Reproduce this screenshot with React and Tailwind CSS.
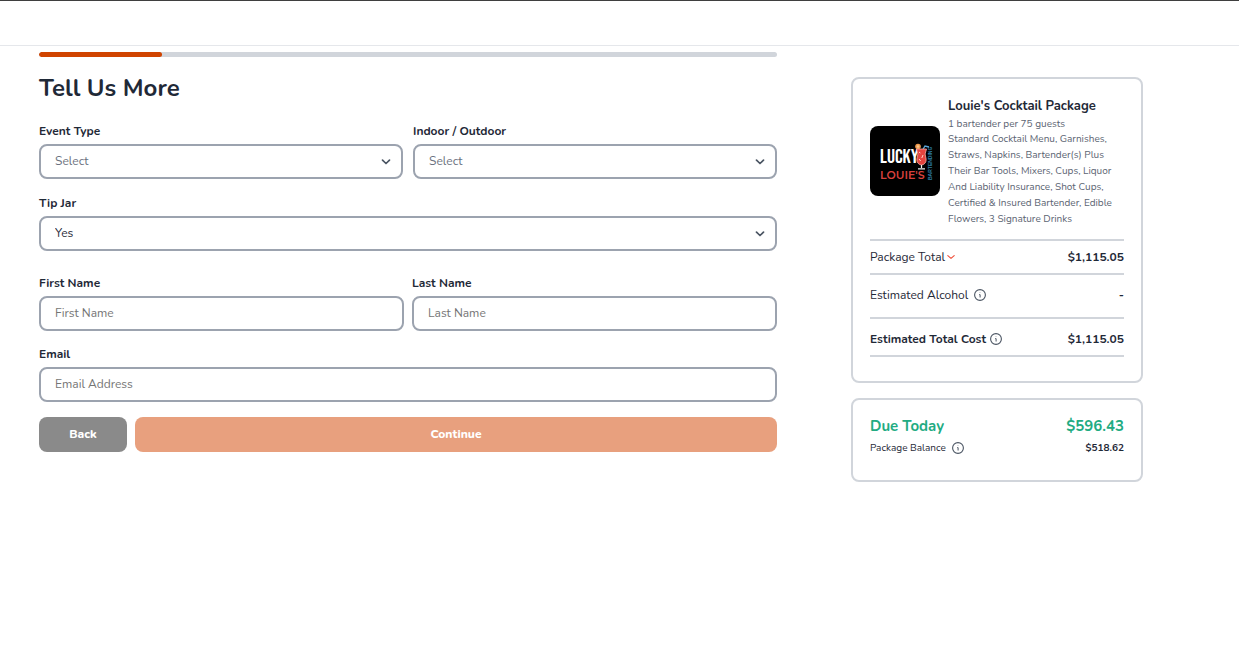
import { useState } from "react";
import clsx from "clsx";

const fieldClass =
    "block w-full h-[35px] rounded-lg border-2 border-[#9ca3af] bg-white px-3.5 pb-0.5 text-xs outline-none placeholder:text-[#757575] focus:border-[#d04400]";

function Field({ id, label, children }) {
    return (
        <div className="min-w-0 flex-1">
            <label htmlFor={id} className="mb-[5px] block text-xs leading-4 font-bold">
                {label}
            </label>
            {children}
        </div>
    );
}

function SelectField({ id, label, options, value, onChange }) {
    return (
        <Field id={id} label={label}>
            <div className="relative">
                <select
                    id={id}
                    value={value}
                    onChange={(e) => onChange(e.target.value)}
                    className={clsx(fieldClass, "appearance-none", value ? "text-[#1f2937]" : "text-[#6b7280]")}
                >
                    {options.map((option) => (
                        <option key={option} value={option === "Select" ? "" : option}>
                            {option}
                        </option>
                    ))}
                </select>
                <svg
                    className="pointer-events-none absolute top-3.5 right-3 h-2 w-2.5 text-[#4b5563]"
                    viewBox="0 0 10 8"
                    fill="none"
                    stroke="currentColor"
                    strokeWidth={1.7}
                >
                    <path strokeLinecap="round" strokeLinejoin="round" d="M1.5 2.2 5 5.5l3.5-3.3" />
                </svg>
            </div>
        </Field>
    );
}

function InfoButton({ label }) {
    return (
        <button type="button" aria-label={label} className="text-[#4b5563]">
            <svg className="h-3 w-3" viewBox="0 0 12 12" fill="none" stroke="currentColor">
                <circle cx="6" cy="6" r="5.4" strokeWidth={1.1} />
                <path d="M5.2 5.6h.9v2.9" strokeWidth={1} />
                <circle cx="6" cy="3.7" r=".35" fill="currentColor" stroke="none" />
            </svg>
        </button>
    );
}

function Logo() {
    return (
        <svg className="h-[70px] w-[70px] shrink-0 rounded-lg" viewBox="0 0 70 70" role="img" aria-label="Lucky Louie's Bartending">
            <rect width="70" height="70" fill="#000" />
            <text x="10" y="37" fill="#fff" className="font-['Bebas_Neue','Oswald','Liberation_Sans',sans-serif] text-[20px]">
                LUCKY
            </text>
            <text x="10" y="53" fill="#d8413d" className="font-['Montserrat','Liberation_Sans',sans-serif] text-[11px] font-semibold">
                LOUIE'S
            </text>
            <text
                transform="translate(62 54) rotate(-90)"
                fill="#2f7ea6"
                className="font-['Liberation_Sans',sans-serif] text-[5px] font-bold"
            >
                BARTENDING
            </text>
            {/* hurricane glass */}
            <path d="m52 25 3-5 4 1" fill="none" stroke="#5aa5d6" strokeWidth="1.4" />
            <circle cx="48" cy="20.5" r="2.8" fill="#f19a4b" />
            <circle cx="48" cy="20.5" r="1.2" fill="#f7c58d" />
            <path d="M46.5 23h10l-1.4 5 1 5c.3 3.3-1.5 5.7-4.6 6-3.1-.3-4.9-2.7-4.6-6l1-5z" fill="#e4433e" stroke="#f5aaa2" strokeWidth=".8" />
            <path d="m49 26 1.4 1m2.6 2-1.2 3m-2.8 1 1.7 2" stroke="#ffd1ca" strokeWidth="1" />
            <path d="M51.5 39v3m-3.5.8h7" stroke="#eee" strokeWidth="1.2" />
        </svg>
    );
}

export default function App() {
    const [eventType, setEventType] = useState("");
    const [location, setLocation] = useState("");
    const [tipJar, setTipJar] = useState("Yes");

    return (
        <div className="min-h-screen bg-white font-['Nunito','Lato',sans-serif] text-[#1f2937]">
            <header className="h-[46px] border-t border-b border-t-[#3f3f3f] border-b-[#e5e7eb]" />

            <main className="flex items-start gap-[74px] pr-24 pl-[39px]">
                <section className="min-w-0 flex-1 pt-1.5">
                    <div className="h-[5px] overflow-hidden rounded-full bg-[#d1d5db]">
                        <div className="h-full w-1/6 rounded-full bg-[#d04400]" />
                    </div>
                    <h1 className="mt-[15px] text-2xl leading-8 font-bold">Tell Us More</h1>

                    <form className="mt-[19px]" onSubmit={(e) => e.preventDefault()}>
                        <div className="flex gap-2.5">
                            <SelectField
                                id="event-type"
                                label="Event Type"
                                options={["Select", "Wedding", "Birthday", "Corporate"]}
                                value={eventType}
                                onChange={setEventType}
                            />
                            <SelectField
                                id="location"
                                label="Indoor / Outdoor"
                                options={["Select", "Indoor", "Outdoor"]}
                                value={location}
                                onChange={setLocation}
                            />
                        </div>
                        <div className="mt-4 flex">
                            <SelectField
                                id="tip-jar"
                                label="Tip Jar"
                                options={["Yes", "No"]}
                                value={tipJar}
                                onChange={setTipJar}
                            />
                        </div>
                        <div className="mt-6 flex gap-2">
                            <Field id="first-name" label="First Name">
                                <input id="first-name" type="text" placeholder="First Name" className={fieldClass} />
                            </Field>
                            <Field id="last-name" label="Last Name">
                                <input id="last-name" type="text" placeholder="Last Name" className={fieldClass} />
                            </Field>
                        </div>
                        <div className="mt-[15px] flex">
                            <Field id="email" label="Email">
                                <input id="email" type="email" placeholder="Email Address" className={fieldClass} />
                            </Field>
                        </div>
                        <div className="mt-[15px] flex gap-2 text-xs font-extrabold text-white">
                            <button type="button" className="h-[35px] w-22 rounded-lg bg-[#8a8a8a] pb-0.5">
                                Back
                            </button>
                            <button type="submit" className="h-[35px] flex-1 rounded-lg bg-[#e8a07e] pb-0.5">
                                Continue
                            </button>
                        </div>
                    </form>
                </section>

                <aside className="w-[292px] shrink-0 pt-[31px]">
                    <div className="rounded-lg border-2 border-[#d1d5db] px-[17px] pt-4 pb-6">
                        <div className="flex items-center gap-2 pb-3">
                            <Logo />
                            <div className="min-w-0">
                                <h2 className="text-[13px] leading-[22px] font-bold">Louie's Cocktail Package</h2>
                                <div className="text-[10px] text-[#5b6472]">
                                    <p className="leading-[14px]">1 bartender per 75 guests</p>
                                    <p className="leading-4">
                                        Standard Cocktail Menu, Garnishes, Straws, Napkins, Bartender(s) Plus Their Bar
                                        Tools, Mixers, Cups, Liquor And Liability Insurance, Shot Cups, Certified &amp;
                                        Insured Bartender, Edible Flowers, 3 Signature Drinks
                                    </p>
                                </div>
                            </div>
                        </div>
                        <div className="text-xs leading-4">
                            <div className="flex items-center justify-between border-y-2 border-[#d1d5db] py-2">
                                <button type="button" className="flex items-center gap-0.5">
                                    Package Total
                                    <svg className="h-2 w-2" viewBox="0 0 8 8" fill="none" stroke="#ef4d37" strokeWidth={1.1}>
                                        <path strokeLinecap="round" strokeLinejoin="round" d="M.8 2.6 4 5.4l3.2-2.8" />
                                    </svg>
                                </button>
                                <span className="font-bold">$1,115.05</span>
                            </div>
                            <div className="flex items-center justify-between border-b-2 border-[#d1d5db] pt-3 pb-3.5">
                                <span className="flex items-center gap-1.5">
                                    Estimated Alcohol
                                    <InfoButton label="About estimated alcohol" />
                                </span>
                                <span className="font-bold">-</span>
                            </div>
                            <div className="flex items-center justify-between border-b-2 border-[#d1d5db] pt-3 pb-2 font-bold">
                                <span className="flex items-center gap-1">
                                    Estimated Total Cost
                                    <InfoButton label="About estimated total cost" />
                                </span>
                                <span>$1,115.05</span>
                            </div>
                        </div>
                    </div>

                    <div className="mt-[15px] rounded-lg border-2 border-[#d1d5db] px-[17px] pt-4 pb-6">
                        <div className="flex justify-between text-[15px] leading-5 font-bold text-[#22ab82]">
                            <span>Due Today</span>
                            <span>$596.43</span>
                        </div>
                        <div className="mt-1 flex items-center justify-between text-[10px] leading-4">
                            <span className="flex items-center gap-1.5">
                                Package Balance
                                <InfoButton label="About package balance" />
                            </span>
                            <span className="font-bold">$518.62</span>
                        </div>
                    </div>
                </aside>
            </main>
        </div>
    );
}
